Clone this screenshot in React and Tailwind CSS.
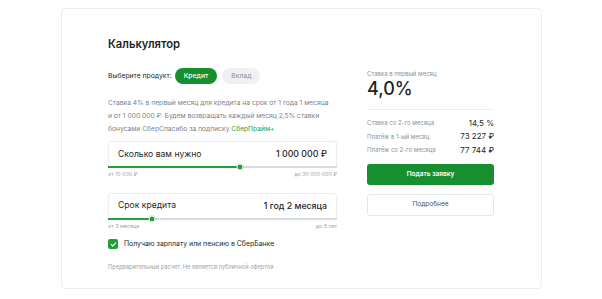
import React, { useState } from 'react';

function SliderBox({ label, value, pct, min, max }) {
  return (
    <div>
      <div className="relative h-[25px] bg-white rounded-t-[3px] border border-b-0 border-[#eceef1] flex items-center justify-between px-[9px] shadow-[0_1px_3px_rgba(0,0,0,0.04)]">
        <span className="text-[8.6px] text-[#1f1f22]">{label}</span>
        <span className="text-[8.8px] font-medium text-[#1f1f22]">{value}</span>
      </div>
      <div className="relative h-[2px] bg-[#d9dcdf]">
        <div className="h-full bg-[#21a038]" style={{ width: pct }} />
        <div
          className="absolute top-1/2 -translate-x-1/2 -translate-y-1/2 w-[7px] h-[7px] rounded-full bg-[#21a038] border-[1.5px] border-white shadow-[0_0_1px_rgba(0,0,0,0.3)]"
          style={{ left: pct }}
        />
      </div>
      <div className="flex justify-between mt-[3px] text-[5.3px] text-[#9ea3a8]">
        <span>{min}</span>
        <span>{max}</span>
      </div>
    </div>
  );
}

export default function App() {
  const [product, setProduct] = useState('credit');
  const [salary, setSalary] = useState(true);

  return (
    <div className="w-[602px] h-[299px] bg-white pt-[8px] pl-[61px]" style={{ fontFamily: 'Inter, "Noto Sans", sans-serif' }}>
      <div className="w-[481px] h-[281px] border border-[#eceef1] rounded-[4px] pl-[46px] pt-[25px] flex gap-[30px]">
        {/* Left */}
        <div className="w-[229px]">
          <h1 className="text-[11.2px] leading-[20px] font-semibold text-[#1f1f22]">Калькулятор</h1>

          <div className="flex items-center mt-[14px]">
            <span className="text-[6.8px] text-[#1f1f22] mr-[3px]">Выберите продукт:</span>
            <button
              onClick={() => setProduct('credit')}
              className={`h-[16px] px-[9px] rounded-full text-[6.8px] font-medium ${product === 'credit' ? 'bg-[#178f2f] text-white' : 'bg-[#eef0f3] text-[#8c9196]'}`}
            >
              Кредит
            </button>
            <button
              onClick={() => setProduct('deposit')}
              className={`h-[16px] px-[9px] ml-[5px] rounded-full text-[6.8px] ${product === 'deposit' ? 'bg-[#178f2f] text-white' : 'bg-[#eef0f3] text-[#8c9196]'}`}
            >
              Вклад
            </button>
          </div>

          <p className="mt-[13px] text-[6.7px] leading-[13px] text-[#7d838a] whitespace-nowrap">
            Ставка 4% в первый месяц для кредита на срок от 1 года 1 месяца
            <br />
            и от 1 000 000 ₽. Будем возвращать каждый месяц 2,5% ставки
            <br />
            бонусами СберСпасибо за подписку <span className="text-[#21a038]">СберПрайм+</span>
          </p>

          <div className="mt-[5px]">
            <SliderBox label="Сколько вам нужно" value="1 000 000 ₽" pct="57.5%" min="от 10 000 ₽" max="до 30 000 000 ₽" />
          </div>
          <div className="mt-[14px]">
            <SliderBox label="Срок кредита" value="1 год 2 месяца" pct="19.3%" min="от 3 месяца" max="до 5 лет" />
          </div>

          <label className="flex items-center gap-[6px] mt-[8px] cursor-pointer" onClick={() => setSalary(!salary)}>
            <span className={`w-[10px] h-[10px] rounded-[2px] flex items-center justify-center ${salary ? 'bg-[#21a038]' : 'border border-[#c5c9cd]'}`}>
              {salary && (
                <svg viewBox="0 0 10 10" className="w-[7px] h-[7px]" fill="none" stroke="white" strokeWidth="1.6" strokeLinecap="round" strokeLinejoin="round">
                  <path d="M2 5.2l2 2 4-4.4" />
                </svg>
              )}
            </span>
            <span className="text-[6.9px] text-[#1f1f22]">Получаю зарплату или пенсию в СберБанке</span>
          </label>

          <p className="mt-[14px] text-[5.7px] text-[#9ea3a8]">Предварительный расчет. Не является публичной офертой</p>
        </div>

        {/* Right */}
        <div className="w-[127px] pt-[35px]">
          <div className="text-[6px] text-[#8c9196]">Ставка в первый месяц</div>
          <div className="text-[18px] leading-[20px] font-medium text-[#1f1f22] mt-[1px]">4,0%</div>
          <div className="h-px bg-[#eceef1] mt-[10px]" />

          <div className="mt-[8px] flex flex-col gap-[4.5px]">
            <div className="flex items-center justify-between h-[9px]">
              <span className="text-[6px] text-[#8c9196]">Ставка со 2-го месяца</span>
              <span className="text-[8px] text-[#1f1f22]">14,5 %</span>
            </div>
            <div className="flex items-center justify-between h-[9px]">
              <span className="text-[6px] text-[#8c9196]">Платёж в 1-ый месяц</span>
              <span className="text-[8px] text-[#1f1f22]">73 227 ₽</span>
            </div>
            <div className="flex items-center justify-between h-[9px]">
              <span className="text-[6px] text-[#8c9196]">Платёж со 2-го месяца</span>
              <span className="text-[8px] text-[#1f1f22]">77 744 ₽</span>
            </div>
          </div>

          <button className="mt-[10px] w-full h-[21px] rounded-[3px] bg-[#178f2f] text-white text-[6.5px] font-semibold">
            Подать заявку
          </button>
          <button className="mt-[9px] w-full h-[22px] rounded-[3px] border border-[#e4e7ea] bg-white text-[#4a4f55] text-[6.5px]">
            Подробнее
          </button>
        </div>
      </div>
    </div>
  );
}
